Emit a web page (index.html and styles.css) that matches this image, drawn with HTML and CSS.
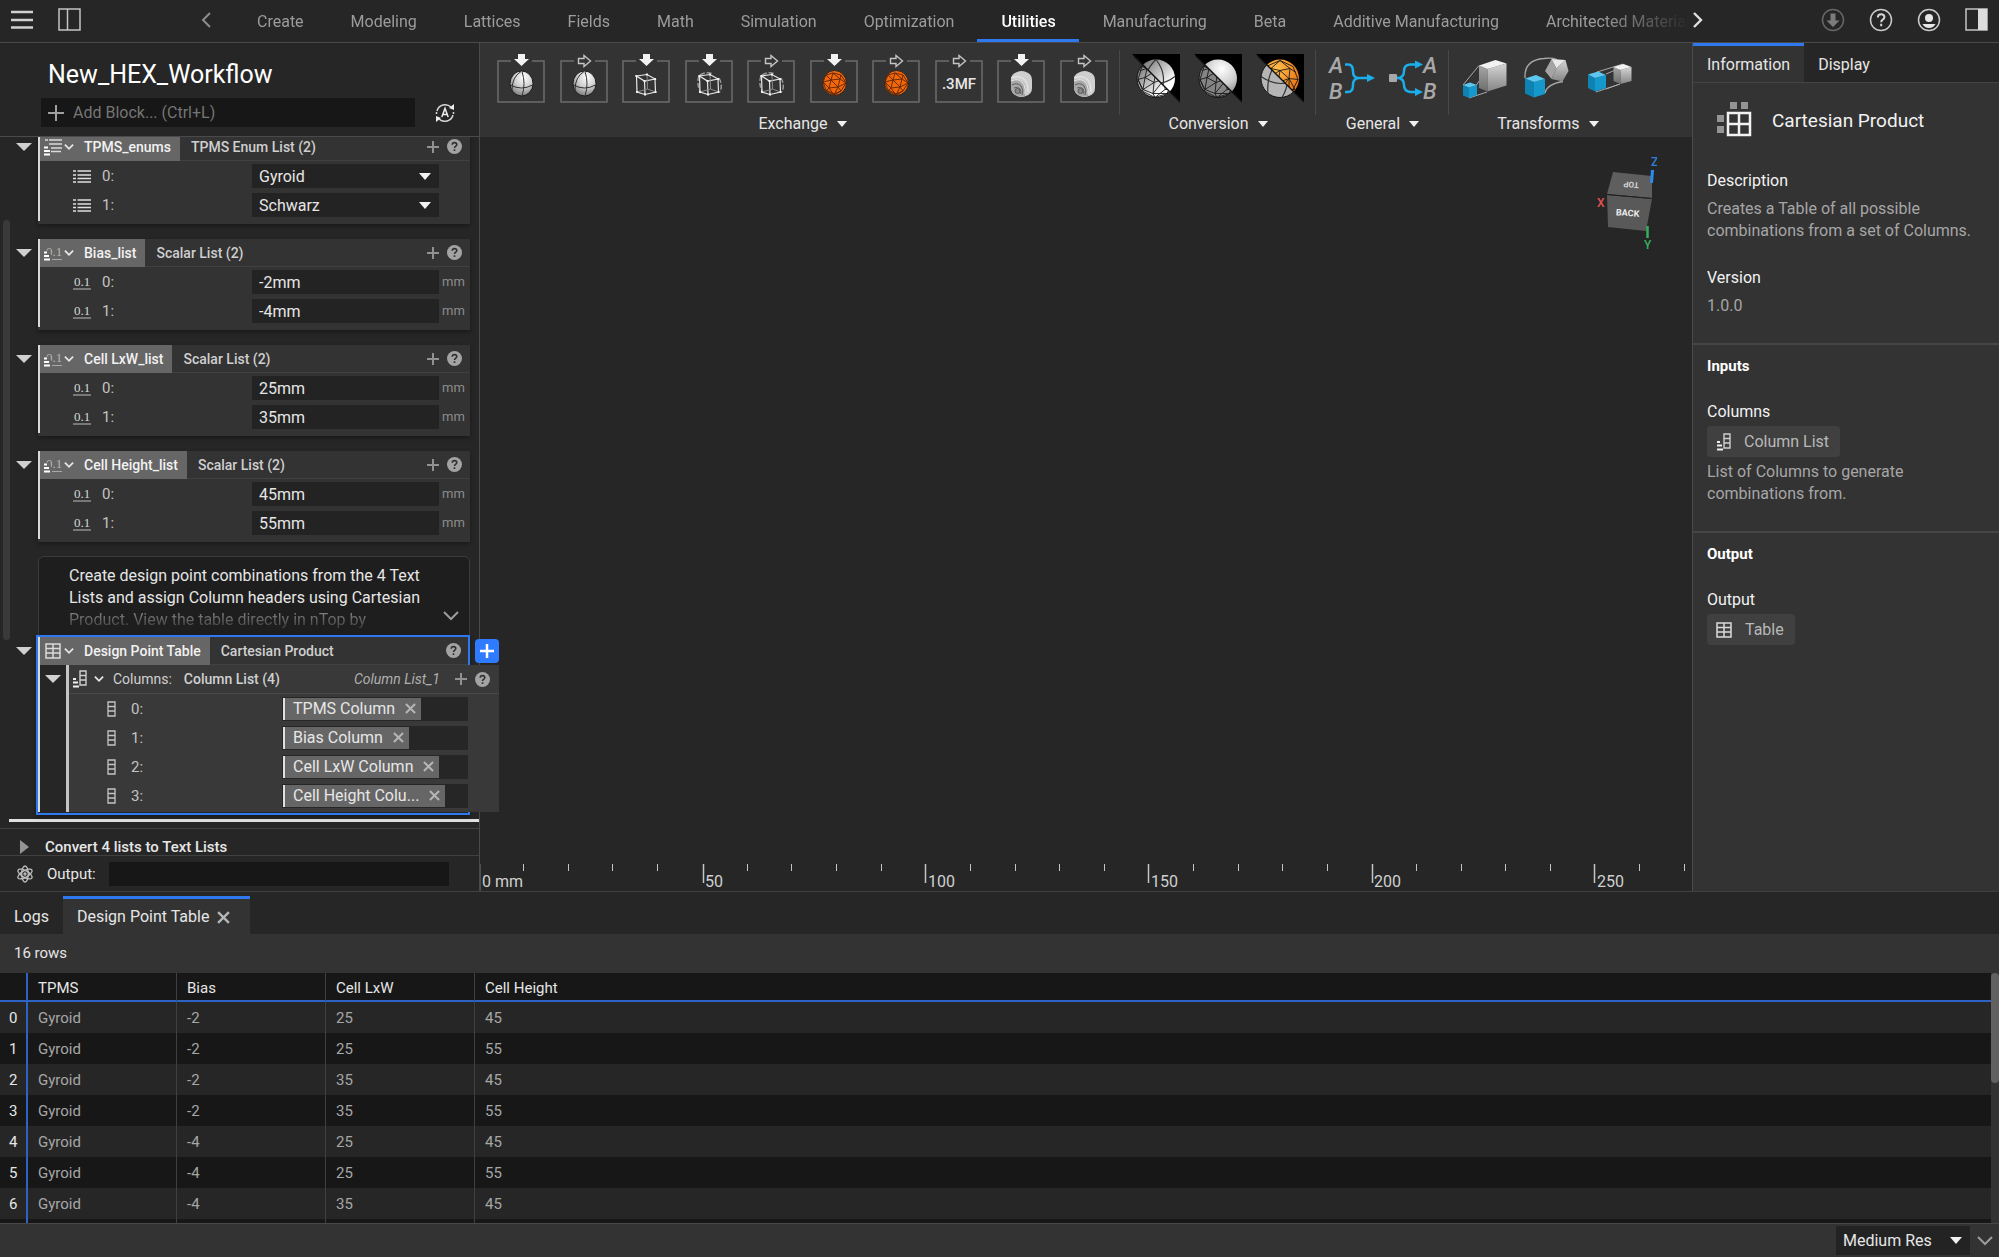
FILE: index.html
```html
<!DOCTYPE html>
<html lang="en">
<head>
<meta charset="utf-8">
<title>New_HEX_Workflow</title>
<link rel="stylesheet" href="styles.css">
</head>
<body>
<svg class="defs" width="0" height="0" aria-hidden="true">
  <defs>
    <radialGradient id="ball" cx="60%" cy="25%" r="80%"><stop offset="0" stop-color="#fff"/><stop offset=".5" stop-color="#cfcfcf"/><stop offset="1" stop-color="#777"/></radialGradient>
    <linearGradient id="sheen" x1="0" y1="0" x2="1" y2="1"><stop offset="0" stop-color="#5e5e5e"/><stop offset=".75" stop-color="#fff"/></linearGradient>
    <radialGradient id="amber" cx="40%" cy="25%" r="80%"><stop offset="0" stop-color="#ffc04a"/><stop offset="1" stop-color="#e8660a"/></radialGradient>
    <linearGradient id="steel" x1="0" y1="0" x2="0" y2="1"><stop offset="0" stop-color="#d5d5d5"/><stop offset="1" stop-color="#858585"/></linearGradient>
    <linearGradient id="steelDark" x1="0" y1="0" x2="0" y2="1"><stop offset="0" stop-color="#a5a5a5"/><stop offset="1" stop-color="#6e6e6e"/></linearGradient>
    <clipPath id="lower"><path d="M0 0L48 48H0z"/></clipPath>
    <clipPath id="upper"><path d="M0 0H48V48z"/></clipPath>
  </defs>
  <symbol id="frame" viewBox="0 0 48 49"><path d="M14 7H1V48H47V7H35" fill="none" stroke="#6c6c6c" stroke-width="1.5"/></symbol>
  <symbol id="down" viewBox="0 0 48 49"><path d="M21 0h7v5h4l-7.500 7-7.500-7h4z" fill="#f2f2f2"/></symbol>
  <symbol id="out" viewBox="0 0 48 49"><path d="M18.500 4.500h5.500V1.500l6.500 5.500-6.500 5.500V9.500h-5.500z" fill="none" stroke="#c4c4c4" stroke-width="1.400"/></symbol>
  <symbol id="egg" viewBox="0 0 48 49"><ellipse cx="24.500" cy="29.500" rx="11.500" ry="12.500" fill="url(#ball)" stroke="#1c1c1c"/><path d="M13.500 31q11 6 22 0M25 17.500q4 12 0 24.500M24 17.500Q15 23 15 36" fill="none" stroke="#333"/></symbol>
  <symbol id="wire" viewBox="0 0 48 49"><path d="M14.500 22L25 20.500 33 25 22.500 27zM14.500 22L15 38l8 2.500L22.500 27M33 25l.5 13L23 40.500" fill="none" stroke="#e6e6e6" stroke-width="1.200"/><path d="M25 20.500L25.500 35 15 38M25.500 35l8 3" fill="none" stroke="#8c8c8c"/><path d="M13.500 21h2v2h-2zM24 19.500h2v2h-2zM32 24h2v2h-2zM21.500 26h2v2h-2zM14 37h2v2h-2zM22 39.500h2v2h-2zM32.500 37h2v2h-2z" fill="#f2f2f2"/></symbol>
  <symbol id="wirecurve" viewBox="0 0 48 49"><path d="M15 21q7-4 13-1M34 24q4 7 1 14M14 22q-3 8 2 17" fill="none" stroke="#9a9a9a" stroke-width="1.500" stroke-dasharray="5 2"/></symbol>
  <symbol id="meshegg" viewBox="0 0 48 49"><ellipse cx="24.500" cy="29" rx="12" ry="12.500" fill="#f2670c" stroke="#262626"/><path d="M16 21l7-2 8 2 5 8-5 8-7 3-8-4-3-8zM13 28l8-2 9-1 6 4M16 21l5 5 2-7 7 6 1-4M21 26l-2 8 9-1 2-8M21 26l7 7 8-4M13 28l6 6-3 3M19 34l5 7 4-8 3 4M16 37l8 4 7-4" fill="none" stroke="#5c2404" stroke-width=".9"/></symbol>
  <symbol id="slices" viewBox="0 0 48 49"><path d="M14 28q-1-8 6-10 5-2 9 0 6 2 6 8v8q0 6-6 8-5 2-9 0-6-3-6-8z" fill="#cfcfcf"/><path d="M14 26q6-2 11 1 4 3 4 9l-1 6q-4 1-8 0-6-3-6-8z" fill="#a8a8a8"/><path d="M14 24q8-3 13 1 4 4 4 13M14 27q7-3 11 1 4 4 3 12" fill="none" stroke="#ececec"/><path d="M15 31q5-3 9 1 3 4 1 9M17 34q4-2 6 1 2 3 0 5" fill="none" stroke="#5e5e5e"/><circle cx="20.500" cy="37" r="2.500" fill="#8a8a8a" stroke="#5a5a5a"/></symbol>
  <symbol id="facets" viewBox="0 0 48 48"><path d="M10 12l14-6 13 6 5 13-7 14-12 4-12-6-5-12zM8 16l7-2 9 2 10-2 6 4M10 12l5 2 9-8 10 8M15 14l-2 9 11-7 9 8 1-10M6 25l7-2 9 5 11-4 9 1M13 23l-2 12 11-7 2-12M22 28l-1 11 12-15 6 11M11 35l10 4 14 0M21 39l2 4 10-8 0-11M33 35l6 0M11 35l-5-10" fill="none" stroke="#1a1a1a" stroke-width=".9"/></symbol>
  <symbol id="arcs" viewBox="0 0 48 48"><path d="M5 22q20 14 38 0M24 5q14 18 2 38M24 5Q10 18 12 40" fill="none" stroke="#333" stroke-width="1.200"/></symbol>
  <symbol id="caret" viewBox="0 0 12 7"><path d="M0 0h12L6 7z" fill="#f2f2f2"/></symbol>
  <symbol id="chev" viewBox="0 0 11 8"><path d="M1 1.500l4.500 4.500L10 1.500" fill="none" stroke="#e6e6e6" stroke-width="2"/></symbol>
  <symbol id="add" viewBox="0 0 14 14"><path d="M7 1v12M1 7h12" stroke="#919191" stroke-width="2"/></symbol>
  <symbol id="help" viewBox="0 0 15 15"><circle cx="7.500" cy="7.500" r="7.500" fill="#a3a3a3"/><path d="M5.200 5.800q.1-2.200 2.300-2.200t2.300 1.900q0 1-1.200 1.800-1.100.7-1.100 1.600M7.500 10.200v1.800" fill="none" stroke="#303030" stroke-width="1.600"/></symbol>
  <symbol id="list" viewBox="0 0 18 14"><path d="M0 2h3M0 6h3M0 9.500h3M0 13h3M4.500 2H18M4.500 6H18M4.500 9.500H18M4.500 13H18" stroke="#e0e0e0" stroke-width="1.700"/></symbol>
  <symbol id="enumlist" viewBox="0 0 20 18"><path d="M2 2h3M6 2h13M6 6h13M8 10h11M8 13.500h10" stroke="#d9d9d9" stroke-width="1.700"/><path d="M1 9.500h4M1 13h6M1 16.500h6" stroke="#fff" stroke-width="2"/></symbol>
  <symbol id="tbl" viewBox="0 0 16 16"><path d="M1 1h14v14H1zM1 5.500h14M1 10h14M8 1v14" fill="none" stroke="#dadada" stroke-width="1.500"/></symbol>
  <symbol id="collist" viewBox="0 0 15 18"><path d="M8 1h6v14H8zM8 5.500h6M8 10h6" fill="none" stroke="#cfcfcf" stroke-width="1.400"/><path d="M1 9h3M1 12.500h5M1 16.500h6" stroke="#eee" stroke-width="2"/></symbol>
  <symbol id="col" viewBox="0 0 9 16"><path d="M1 1h7v14H1zM1 5.500h7M1 10h7" fill="none" stroke="#c4c4c4" stroke-width="1.300"/></symbol>
  <symbol id="x" viewBox="0 0 12 12"><path d="M1 1l10 10M11 1L1 11" stroke="#b5b5b5" stroke-width="2.200"/></symbol>
</svg>
<svg hidden>
  <symbol id="scalarlist" viewBox="0 0 20 18"><text x="3" y="12" font-family="Liberation Serif, serif" font-size="13" fill="#b5b5b5">0.1</text><path d="M9 15.500h10" stroke="#a8a8a8"/><path d="M0 6.500h5v3h3v9H0z" fill="#666"/><path d="M1 8.500h3M1 12h5M1 15.500h6" stroke="#fff" stroke-width="2"/></symbol>
  <symbol id="scalar" viewBox="0 0 18 16"><text x="1" y="12" font-family="Liberation Serif, serif" font-size="13" fill="#d6d6d6">0.1</text><path d="M0 15h18" stroke="#bdbdbd"/></symbol>
</svg>

<header class="topbar">
  <button class="icon-btn menu-btn" aria-label="Menu"><svg width="24" height="20" viewBox="0 0 24 20"><path d="M1 2h22M1 10h22M1 17.500h22" stroke="#d0d0d0" stroke-width="2.500"/></svg></button>
  <button class="icon-btn" aria-label="Toggle left panel"><svg width="24" height="24" viewBox="0 0 24 24"><path d="M1 1h21v21H1zM9.500 1v21" fill="none" stroke="#c4c4c4" stroke-width="1.500"/></svg></button>
  <button class="icon-btn nav-prev" aria-label="Scroll tabs left"><svg width="10" height="16" viewBox="0 0 10 16"><path d="M9 1L2 8l7 7" fill="none" stroke="#8c8c8c" stroke-width="2"/></svg></button>
  <nav class="nav">
    <a href="#create">Create</a><a href="#modeling">Modeling</a><a href="#lattices">Lattices</a><a href="#fields">Fields</a><a href="#math">Math</a><a href="#simulation">Simulation</a><a href="#optimization">Optimization</a><a class="active" href="#utilities">Utilities</a><a href="#manufacturing">Manufacturing</a><a href="#beta">Beta</a><a href="#additive">Additive Manufacturing</a><a href="#architected">Architected Material</a>
  </nav>
  <button class="icon-btn nav-next" aria-label="Scroll tabs right"><svg width="10" height="16" viewBox="0 0 10 16"><path d="M1 1l7 7-7 7" fill="none" stroke="#e0e0e0" stroke-width="2.400"/></svg></button>
  <div class="top-actions">
    <button class="icon-btn" aria-label="Download"><svg width="24" height="24" viewBox="0 0 24 24"><circle cx="12" cy="12" r="10.500" fill="none" stroke="#666" stroke-width="1.500"/><path d="M9.500 5.500h5v7h4L12 19l-6.500-6.500h4z" fill="#7c7c7c"/></svg></button>
    <button class="icon-btn" aria-label="Help"><svg width="24" height="24" viewBox="0 0 24 24"><circle cx="12" cy="12" r="10.500" fill="none" stroke="#c9c9c9" stroke-width="1.500"/><path d="M8.800 9.500q.1-3.300 3.300-3.300t3.300 2.700q0 1.500-1.700 2.700-1.500 1-1.500 2.600M12.200 15.800v2.400" fill="none" stroke="#d6d6d6" stroke-width="2"/></svg></button>
    <button class="icon-btn" aria-label="Account"><svg width="24" height="24" viewBox="0 0 24 24"><circle cx="12" cy="12" r="10.500" fill="none" stroke="#c9c9c9" stroke-width="1.500"/><circle cx="12" cy="10" r="4" fill="#e6e6e6"/><path d="M5.500 16h13q-2 4-6.500 4t-6.500-4z" fill="#e6e6e6"/></svg></button>
    <button class="icon-btn" aria-label="Toggle right panel"><svg width="24" height="24" viewBox="0 0 24 24"><path d="M1 1h21v21H1z" fill="none" stroke="#c4c4c4" stroke-width="1.500"/><path d="M13 1h9v21h-9z" fill="#dcdcdc"/></svg></button>
  </div>
</header>

<main class="main">
  <aside class="left">
    <div class="left-head">
      <h1>New_HEX_Workflow</h1>
      <div class="add-row">
        <label class="add-box"><svg width="16" height="16" viewBox="0 0 16 16"><path d="M8 0v16M0 8h16" stroke="#a0a0a0" stroke-width="2"/></svg><input type="text" placeholder="Add Block... (Ctrl+L)" aria-label="Add Block"></label>
        <button class="icon-btn" aria-label="Auto run"><svg width="20" height="20" viewBox="0 0 20 20"><path d="M16 4A8.500 8.500 0 0 0 2 8M4 16a8.500 8.500 0 0 0 14-4M1.500 11V9M18.500 11V9" fill="none" stroke="#d6d6d6" stroke-width="1.500"/><path d="M19 1v6l-5-2zM1 19v-6l5 2z" fill="#eee"/><path d="M6.800 14L10 5.500l3.200 8.500M8 11.500h4" fill="none" stroke="#eee" stroke-width="1.500"/></svg></button>
      </div>
    </div>

    <div class="tree">
      <div class="thumb"></div>
      <div class="tree-list">
        <section class="node">
          <button class="toggle" aria-label="Collapse TPMS_enums"></button>
          <div class="block"><div class="block-in">
            <header class="bh"><span class="bname"><svg class="i-list"><use href="#enumlist"/></svg><svg class="i-chev"><use href="#chev"/></svg>TPMS_enums</span><span class="btype">TPMS Enum List (2)</span><svg class="i-add"><use href="#add"/></svg><svg class="i-help"><use href="#help"/></svg></header>
            <div class="row"><svg class="i-row"><use href="#list"/></svg><label for="e0">0:</label><span class="sel"><select id="e0"><option>Gyroid</option></select><svg><use href="#caret"/></svg></span></div>
            <div class="row"><svg class="i-row"><use href="#list"/></svg><label for="e1">1:</label><span class="sel"><select id="e1"><option>Schwarz</option></select><svg><use href="#caret"/></svg></span></div>
          </div></div>
        </section>
        <section class="node">
          <button class="toggle" aria-label="Collapse Bias_list"></button>
          <div class="block"><div class="block-in">
            <header class="bh"><span class="bname"><svg class="i-list"><use href="#scalarlist"/></svg><svg class="i-chev"><use href="#chev"/></svg>Bias_list</span><span class="btype">Scalar List (2)</span><svg class="i-add"><use href="#add"/></svg><svg class="i-help"><use href="#help"/></svg></header>
            <div class="row"><svg class="i-row"><use href="#scalar"/></svg><label for="b0">0:</label><input id="b0" type="text" value="-2mm"><span class="unit">mm</span></div>
            <div class="row"><svg class="i-row"><use href="#scalar"/></svg><label for="b1">1:</label><input id="b1" type="text" value="-4mm"><span class="unit">mm</span></div>
          </div></div>
        </section>
        <section class="node">
          <button class="toggle" aria-label="Collapse Cell LxW_list"></button>
          <div class="block"><div class="block-in">
            <header class="bh"><span class="bname"><svg class="i-list"><use href="#scalarlist"/></svg><svg class="i-chev"><use href="#chev"/></svg>Cell LxW_list</span><span class="btype">Scalar List (2)</span><svg class="i-add"><use href="#add"/></svg><svg class="i-help"><use href="#help"/></svg></header>
            <div class="row"><svg class="i-row"><use href="#scalar"/></svg><label for="c0">0:</label><input id="c0" type="text" value="25mm"><span class="unit">mm</span></div>
            <div class="row"><svg class="i-row"><use href="#scalar"/></svg><label for="c1">1:</label><input id="c1" type="text" value="35mm"><span class="unit">mm</span></div>
          </div></div>
        </section>
        <section class="node">
          <button class="toggle" aria-label="Collapse Cell Height_list"></button>
          <div class="block"><div class="block-in">
            <header class="bh"><span class="bname"><svg class="i-list"><use href="#scalarlist"/></svg><svg class="i-chev"><use href="#chev"/></svg>Cell Height_list</span><span class="btype">Scalar List (2)</span><svg class="i-add"><use href="#add"/></svg><svg class="i-help"><use href="#help"/></svg></header>
            <div class="row"><svg class="i-row"><use href="#scalar"/></svg><label for="h0">0:</label><input id="h0" type="text" value="45mm"><span class="unit">mm</span></div>
            <div class="row"><svg class="i-row"><use href="#scalar"/></svg><label for="h1">1:</label><input id="h1" type="text" value="55mm"><span class="unit">mm</span></div>
          </div></div>
        </section>
      </div>

      <div class="note">
        <p>Create design point combinations from the 4 Text Lists and assign Column headers using Cartesian <span class="fade">Product. View the table directly in nTop by</span></p>
        <button class="icon-btn" aria-label="Expand note"><svg width="16" height="10" viewBox="0 0 16 10"><path d="M1 1l7 7 7-7" fill="none" stroke="#9c9c9c" stroke-width="2"/></svg></button>
      </div>

      <section class="node selected">
        <button class="toggle" aria-label="Collapse Design Point Table"></button>
        <div class="block"><div class="block-in">
          <header class="bh"><span class="bname"><svg class="i-tbl"><use href="#tbl"/></svg><svg class="i-chev"><use href="#chev"/></svg>Design Point Table</span><span class="btype">Cartesian Product</span><svg class="i-help"><use href="#help"/></svg></header>
          <div class="nest">
            <button class="toggle" aria-label="Collapse Columns"></button>
            <div class="nest-panel">
              <header class="nh"><svg class="i-col"><use href="#collist"/></svg><svg class="i-chev"><use href="#chev"/></svg><span class="nlabel">Columns:</span><span>Column List (4)</span><em>Column List_1</em><svg class="i-add"><use href="#add"/></svg><svg class="i-help"><use href="#help"/></svg></header>
              <div class="nrow"><svg class="i-c"><use href="#col"/></svg><span class="idx">0:</span><div class="slot"><span class="chip"><span>TPMS Column</span><button aria-label="Remove"><svg><use href="#x"/></svg></button></span></div></div>
              <div class="nrow"><svg class="i-c"><use href="#col"/></svg><span class="idx">1:</span><div class="slot"><span class="chip"><span>Bias Column</span><button aria-label="Remove"><svg><use href="#x"/></svg></button></span></div></div>
              <div class="nrow"><svg class="i-c"><use href="#col"/></svg><span class="idx">2:</span><div class="slot"><span class="chip"><span>Cell LxW Column</span><button aria-label="Remove"><svg><use href="#x"/></svg></button></span></div></div>
              <div class="nrow"><svg class="i-c"><use href="#col"/></svg><span class="idx">3:</span><div class="slot"><span class="chip"><span>Cell Height Colu...</span><button aria-label="Remove"><svg><use href="#x"/></svg></button></span></div></div>
            </div>
          </div>
        </div>
        <button class="plus" aria-label="Add block here"><svg width="16" height="16" viewBox="0 0 16 16"><path d="M8 1v14M1 8h14" stroke="#fff" stroke-width="2.500"/></svg></button>
        </div>
      </section>
      <div class="insert-line"></div>
      <div class="closed"><svg width="9" height="14" viewBox="0 0 9 14"><path d="M0 0l9 7-9 7z" fill="#949494"/></svg><h2>Convert 4 lists to Text Lists</h2></div>
    </div>

    <div class="output-row">
      <svg width="18" height="18" viewBox="0 0 18 18" fill="none" stroke="#bdbdbd" stroke-width="1.300"><ellipse cx="9" cy="9" rx="3.300" ry="8"/><ellipse cx="9" cy="9" rx="3.300" ry="8" transform="rotate(60 9 9)"/><ellipse cx="9" cy="9" rx="3.300" ry="8" transform="rotate(120 9 9)"/><circle cx="9" cy="9" r="1"/></svg>
      <label for="outp">Output:</label><input id="outp" type="text">
    </div>
  </aside>

  <section class="center">
    <div class="ribbon">
      <div class="group exchange">
        <div class="tools">
          <button aria-label="Import part"><svg width="48" height="49"><use href="#frame"/><use href="#down"/><use href="#egg"/></svg></button>
          <button aria-label="Export part"><svg width="48" height="49"><use href="#frame"/><use href="#out"/><use href="#egg"/></svg></button>
          <button aria-label="Import lattice"><svg width="48" height="49"><use href="#frame"/><use href="#down"/><use href="#wire"/></svg></button>
          <button aria-label="Import curves"><svg width="48" height="49"><use href="#frame"/><use href="#down"/><use href="#wirecurve"/><use href="#wire"/></svg></button>
          <button aria-label="Export lattice"><svg width="48" height="49"><use href="#frame"/><use href="#out"/><use href="#wirecurve"/><use href="#wire"/></svg></button>
          <button aria-label="Import mesh"><svg width="48" height="49"><use href="#frame"/><use href="#down"/><use href="#meshegg"/></svg></button>
          <button aria-label="Export mesh"><svg width="48" height="49"><use href="#frame"/><use href="#out"/><use href="#meshegg"/></svg></button>
          <button aria-label="Export 3MF"><svg width="48" height="49"><use href="#frame"/><use href="#out"/><text x="24" y="35" text-anchor="middle" font-size="15" font-weight="500" fill="#e6e6e6">.3MF</text></svg></button>
          <button aria-label="Import slices"><svg width="48" height="49"><use href="#frame"/><use href="#down"/><use href="#slices"/></svg></button>
          <button aria-label="Export slices"><svg width="48" height="49"><use href="#frame"/><use href="#out"/><use href="#slices"/></svg></button>
        </div>
        <button class="glabel">Exchange <svg><use href="#caret"/></svg></button>
      </div>
      <div class="group conversion">
        <div class="tools">
          <button aria-label="Body from mesh"><svg width="48" height="49" viewBox="0 0 48 49"><path d="M0 0H48V48z"/><circle cx="24" cy="24.500" r="19" fill="url(#sheen)"/><g clip-path="url(#upper)"><use href="#arcs"/></g><g clip-path="url(#lower)"><circle cx="24" cy="24.500" r="19" fill="url(#sheen)" stroke="#111"/><use href="#facets"/></g><path d="M2 2L48 48" stroke="#111" stroke-width="1.500"/></svg></button>
          <button aria-label="Mesh from body"><svg width="48" height="49" viewBox="0 0 48 49"><path d="M0 0H48V48z"/><circle cx="24" cy="24.500" r="19" fill="url(#ball)"/><g clip-path="url(#lower)"><circle cx="24" cy="24.500" r="19" fill="#858585" stroke="#111"/><use href="#facets"/></g><path d="M2 2L48 48" stroke="#111" stroke-width="1.500"/></svg></button>
          <button aria-label="Volume mesh"><svg width="48" height="49" viewBox="0 0 48 49"><path d="M0 0H48V48z"/><circle cx="24" cy="24.500" r="19" fill="url(#amber)"/><g clip-path="url(#upper)"><use href="#facets"/></g><g clip-path="url(#lower)"><circle cx="24" cy="24.500" r="19" fill="#b5b5b5" stroke="#111"/><use href="#arcs"/></g><path d="M2 2L48 48" stroke="#111" stroke-width="1.500"/></svg></button>
        </div>
        <button class="glabel">Conversion <svg><use href="#caret"/></svg></button>
      </div>
      <div class="group general">
        <div class="tools">
          <button aria-label="Merge"><svg width="48" height="49" viewBox="0 0 48 49"><g font-size="22" font-style="italic" font-weight="500" fill="#a8a8a8"><text x="1" y="19">A</text><text x="1" y="45">B</text></g><path d="M17 10.500h3q5 0 5 7 0 6 5 6.500h10M17 38h3q5 0 5-7 0-6 5-7" fill="none" stroke="#1aaeea" stroke-width="2.500"/><path d="M39 20l8 4-8 4z" fill="#1aaeea"/></svg></button>
          <button aria-label="Split"><svg width="48" height="49" viewBox="0 0 48 49"><g font-size="22" font-style="italic" font-weight="500" fill="#a8a8a8"><text x="34" y="19">A</text><text x="34" y="45">B</text></g><path d="M8 24q7 0 7-7 0-6 6-6.500h6M8 24q7 0 7 7 0 6 6 7h6" fill="none" stroke="#1aaeea" stroke-width="2.500"/><path d="M26 6.500l8 4-8 4zM26 34l8 4-8 4z" fill="#1aaeea"/><rect y="20" width="8" height="8" rx="1" fill="#a8a8a8"/></svg></button>
        </div>
        <button class="glabel">General <svg><use href="#caret"/></svg></button>
      </div>
      <div class="group transforms">
        <div class="tools">
          <button aria-label="Scale"><svg width="48" height="49" viewBox="0 0 48 49"><path d="M2 31L18 11.500M8 44l18-6M15.500 31L26 15" stroke="#a8a8a8"/><path d="M18 11.500L26.500 15v22.500L18 34z" fill="url(#steelDark)"/><path d="M26.500 15l19-5.500v22l-19 6z" fill="url(#steel)"/><path d="M18 11.500L34.500 6l11 3.500-19 5.500z" fill="#f2f2f2"/><path d="M2 31l6 2.500V44l-6-2.500z" fill="#0f82b4"/><path d="M8 33.500l8-2.500v10l-8 3z" fill="#1598cc"/><path d="M2 31l7-2.500 7 2.500-8 2.500z" fill="#5cc8f0"/></svg></button>
          <button aria-label="Rotate"><svg width="48" height="49" viewBox="0 0 48 49"><path d="M1 24Q0 6 20 4.500q8-1 13 1M21 39q2-9 18-11.500" fill="none" stroke="#a8a8a8" stroke-width="1.300"/><path d="M21 17l6.500-12 5 9.500-5 10.500z" fill="#a4a4a4"/><path d="M27.500 5l14 1-9 8.500z" fill="#e9e9e9"/><path d="M41.500 6l3 11-6 10.500-11-2.500 5-10.500z" fill="url(#steel)"/><path d="M1 24.500l9 3.500v15.500l-9-4z" fill="#0f82b4"/><path d="M10 28l11-3v15l-11 3.500z" fill="#1598cc"/><path d="M1 24.500L12 21l9 4-11 3z" fill="#5cc8f0"/></svg></button>
          <button aria-label="Translate"><svg width="48" height="49" viewBox="0 0 48 49"><path d="M10 18l26-8M9 38l24-8M19 20l14-6M19 35l14-5" stroke="#a8a8a8"/><path d="M26.500 13l7 3v14l-7-3z" fill="url(#steelDark)"/><path d="M33.500 16l11-3v14l-11 3z" fill="url(#steel)"/><path d="M26.500 13l10-3 8 3-11 3z" fill="#f2f2f2"/><path d="M1 20.500l7 3.500v13.500l-7-3.500z" fill="#0f82b4"/><path d="M8 24l11-3v13l-11 3.500z" fill="#1598cc"/><path d="M1 20.500l10-3 8 3.500-11 3z" fill="#5cc8f0"/></svg></button>
        </div>
        <button class="glabel">Transforms <svg><use href="#caret"/></svg></button>
      </div>
    </div>
    <div class="viewport">
      <svg class="viewcube" width="66" height="100" viewBox="0 0 66 100" role="img" aria-label="View cube">
        <path d="M22 19l39 4v22l-45-4z" fill="#5e5e5e"/><path d="M16 42l45 4-6 32-38-4z" fill="#595959"/><path d="M16 41.500l45 4" stroke="#222"/>
        <path d="M60.500 30l1-13" stroke="#2b8cf0" stroke-width="3"/><path d="M56.500 73v12" stroke="#35b060" stroke-width="2.500"/>
        <g font-size="12" font-weight="500"><text x="60" y="13" fill="#2f7fd6">Z</text><text x="6" y="54" fill="#e05252">X</text><text x="53" y="96" fill="#35b060">Y</text></g>
        <text x="25" y="63" font-size="9" font-weight="700" fill="#eee" transform="rotate(4 37 60)">BACK</text>
        <text x="-50" y="-26" font-size="8" font-weight="700" fill="#d6d6d6" transform="rotate(184)">TOP</text>
      </svg>
      <svg class="ruler" width="1212" height="27" viewBox="0 0 1212 27">
        <path d="M44.500 0v7M89.500 0v7M133.500 0v7M178.500 0v7M268.500 0v7M312.500 0v7M357.500 0v7M402.500 0v7M491.500 0v7M536.500 0v7M580.500 0v7M625.500 0v7M714.500 0v7M759.500 0v7M803.500 0v7M848.500 0v7M937.500 0v7M982.500 0v7M1026.500 0v7M1071.500 0v7M1160.500 0v7M1205.500 0v7" stroke="#c4c4c4"/>
        <path d="M.5 0v27M224.500 0v19M446.500 0v19M669.500 0v19M893.500 0v19M1115.500 0v19" stroke="#c4c4c4" stroke-width="1.500"/>
        <g font-size="16" fill="#d0d0d0"><text x="3" y="23">0 mm</text><text x="226" y="23">50</text><text x="449" y="23">100</text><text x="672" y="23">150</text><text x="895" y="23">200</text><text x="1118" y="23">250</text></g>
      </svg>
    </div>
  </section>

  <aside class="right">
    <div class="rtabs" role="tablist"><button role="tab" class="on" aria-selected="true">Information</button><button role="tab" aria-selected="false">Display</button></div>
    <div class="rbody">
      <section>
        <div class="rtitle"><svg width="35" height="35" viewBox="0 0 35 35"><path d="M13 0h7v7h-7zM24 0h7v7h-7zM0 13h7v7H0zM0 24h7v7H0z" fill="#949494"/><path d="M11 11h22v22H11zM11 22h22M22 11v22" fill="none" stroke="#f2f2f2" stroke-width="2.500"/></svg><h2>Cartesian Product</h2></div>
        <h3>Description</h3>
        <p>Creates a Table of all possible combinations from a set of Columns.</p>
        <h3 class="gap">Version</h3>
        <p>1.0.0</p>
      </section>
      <section>
        <h2 class="sec">Inputs</h2>
        <h3>Columns</h3>
        <button class="tag"><svg width="15" height="18"><use href="#collist"/></svg>Column List</button>
        <p>List of Columns to generate combinations from.</p>
      </section>
      <section>
        <h2 class="sec">Output</h2>
        <h3>Output</h3>
        <button class="tag"><svg width="16" height="16"><use href="#tbl"/></svg>Table</button>
      </section>
    </div>
  </aside>
</main>

<section class="bottom">
  <div class="btabs" role="tablist"><button role="tab" aria-selected="false">Logs</button><button role="tab" class="on" aria-selected="true">Design Point Table<svg width="13" height="13"><use href="#x"/></svg></button></div>
  <p class="count">16 rows</p>
  <div class="table-area">
    <div class="table-clip">
    <table>
      <colgroup><col class="c-idx"><col class="c-val"><col class="c-val"><col class="c-val"><col></colgroup>
      <thead><tr><td></td><th>TPMS</th><th>Bias</th><th>Cell LxW</th><th>Cell Height</th></tr></thead>
      <tbody>
        <tr><th>0</th><td>Gyroid</td><td>-2</td><td>25</td><td>45</td></tr>
        <tr><th>1</th><td>Gyroid</td><td>-2</td><td>25</td><td>55</td></tr>
        <tr><th>2</th><td>Gyroid</td><td>-2</td><td>35</td><td>45</td></tr>
        <tr><th>3</th><td>Gyroid</td><td>-2</td><td>35</td><td>55</td></tr>
        <tr><th>4</th><td>Gyroid</td><td>-4</td><td>25</td><td>45</td></tr>
        <tr><th>5</th><td>Gyroid</td><td>-4</td><td>25</td><td>55</td></tr>
        <tr><th>6</th><td>Gyroid</td><td>-4</td><td>35</td><td>45</td></tr>
        <tr aria-hidden="true"><th></th><td></td><td></td><td></td><td></td></tr>
      </tbody>
    </table>
    </div>
    <div class="vscroll"><div></div></div>
  </div>
</section>
<footer class="status">
  <span class="sel res"><select aria-label="Resolution"><option>Medium Res</option></select><svg><use href="#caret"/></svg></span>
  <button class="icon-btn" aria-label="Collapse panel"><svg width="16" height="10" viewBox="0 0 16 10"><path d="M1 1l7 7 7-7" fill="none" stroke="#9c9c9c" stroke-width="2"/></svg></button>
</footer>
</body>
</html>
```

FILE: styles.css
```css
:root {
  --bg: #262626;
  --panel: #333333;
  --deep: #171717;
  --line: #4a4a4a;
  --blue: #2e78f0;
  --text: #e6e6e6;
  --muted: #a6a6a6;
}
* { box-sizing: border-box; margin: 0; }
body {
  display: flex;
  flex-direction: column;
  min-height: 100vh;
  background: var(--bg);
  color: var(--text);
  font: 16px/22px Roboto, "Liberation Sans", sans-serif;
}
button, input, select { font: inherit; color: inherit; border: 0; border-radius: 0; background: none; padding: 0; min-width: 0; }
svg { display: block; flex: none; }
svg[hidden] { display: none; }
.defs { position: absolute; }
h1, h2, h3 { font-size: 16px; font-weight: 400; }

/* top bar */
.topbar { display: flex; align-items: center; height: 43px; padding: 0 10px; border-bottom: 1px solid var(--line); }
.topbar .icon-btn { margin-bottom: 2px; }
.menu-btn { margin-right: 24px; }
.nav-prev { margin: 0 22px 0 119px; }
.nav { display: flex; flex: 0 1 1458px; min-width: 0; overflow: hidden; align-self: stretch; mask-image: linear-gradient(to left, transparent 0, #000 90px); }
.nav a { flex: none; padding: 11px 23px 6px 24px; color: #9c9c9c; text-decoration: none; }
.nav a.active { color: #fff; font-weight: 500; border-bottom: 3px solid var(--blue); }
.nav-next { margin-left: 2px; }
.top-actions { display: flex; gap: 24px; margin-left: auto; }

.main { display: flex; flex: 1 1 0; min-height: 0; border-bottom: 1px solid #404040; }

/* workflow panel */
.left { display: flex; flex-direction: column; flex: none; width: 480px; border-right: 1px solid var(--line); position: relative; z-index: 1; }
.left-head { height: 94px; padding: 16px 24px 8px 41px; border-bottom: 1px solid var(--line); }
.left-head h1 { font-size: 25px; line-height: 32px; padding-left: 7px; margin-bottom: 7px; color: #fff; }
.add-row { display: flex; justify-content: space-between; align-items: center; }
.add-box { display: flex; align-items: center; gap: 9px; width: 374px; height: 29px; padding-left: 7px; background: var(--deep); }
.add-box input { flex: 1; }
.add-box input::placeholder { color: #757575; opacity: 1; }

.tree { flex: 1 1 0; min-height: 0; overflow-x: visible; overflow-y: clip; position: relative; }
.thumb { position: absolute; left: 3px; top: 83px; width: 7px; height: 420px; border-radius: 4px; background: #3a3a3a; }
.tree-list { display: flex; flex-direction: column; gap: 15px; margin-top: -4px; }
.node { display: flex; align-items: flex-start; padding-right: 9px; }
.toggle { flex: none; width: 38px; height: 28px; display: grid; place-items: center; padding-left: 10px; }
.toggle::before { content: ""; border: 8px solid transparent; border-top: 8px solid #d0d0d0; border-bottom: 0; }
.block { flex: 1; min-width: 0; background: var(--panel); padding-bottom: 3px; box-shadow: 0 2px 4px rgba(0, 0, 0, .35); }
.block-in { border-left: 2px solid #d9d9d9; padding-bottom: 2px; }
.bh { display: flex; align-items: center; height: 28px; padding-right: 8px; border-bottom: 1px solid #414141; font-size: 14px; font-weight: 500; }
.bname { display: flex; align-items: center; align-self: stretch; margin-bottom: -1px; padding: 0 9px 0 3px; background: #666; color: #f2f2f2; }
.btype { flex: 1; padding-left: 11px; color: #cfcfcf; }
.i-list { width: 20px; height: 18px; }
.i-tbl { width: 16px; height: 16px; margin: 0 2px; }
.i-chev { width: 10px; height: 8px; margin: 0 10px 0 1px; }
.i-add { width: 14px; height: 14px; margin-right: 7px; }
.i-help { width: 15px; height: 15px; }
.row { display: flex; align-items: center; height: 29px; padding: 3px 5px 2px 33px; }
.i-row { width: 18px; height: 16px; margin-right: 11px; }
.row label { width: 150px; color: #c4c4c4; font-size: 15px; }
.row input, .sel { width: 187px; height: 24px; background: #232323; }
.row input { padding: 0 7px; }
.unit { margin-left: 3px; font-size: 13px; color: #8c8c8c; }
.sel { display: grid; align-items: center; }
.sel > * { grid-area: 1 / 1; }
.sel select { appearance: none; width: 100%; height: 100%; padding: 1px 7px 0; }
.sel svg { justify-self: end; width: 12px; height: 7px; margin-right: 8px; pointer-events: none; }

.note { display: flex; align-items: flex-end; height: 80px; margin: 14px 9px 0 38px; padding: 8px 10px 8px 30px; border: 1px solid #3b3b3b; border-radius: 6px 6px 0 0; background: #1e1e1e; }
.note p { flex: 1; align-self: flex-start; }
.note .icon-btn { padding-bottom: 6px; }
.fade { color: transparent; background: linear-gradient(#8c8c8c, #3c3c3c); background-clip: text; }

.selected { position: relative; margin-top: -1px; }
.selected > .toggle { margin: 2px -2px 0 0; }
.selected > .block { border: 2px solid var(--blue); padding-bottom: 1px; background: var(--bg); position: relative; }
.selected .block-in { padding-bottom: 0; }
.selected .bh { background: var(--panel); padding-right: 7px; }
.plus { position: absolute; right: -31px; top: 2px; width: 24px; height: 24px; border-radius: 4px; background: #2e7bff; display: grid; place-items: center; }
.nest { display: flex; margin-right: -31px; position: relative; }
.nest .toggle { width: 26px; padding: 0; }
.nest-panel { flex: 1; border-left: 3px solid #c4c4c4; background: #393939; padding-bottom: 2px; }
.nh { display: flex; align-items: center; height: 29px; padding: 0 9px 0 3px; border-bottom: 1px solid #494949; font-size: 14px; font-weight: 500; color: #d0d0d0; }
.nh .i-chev { margin: 0 9px 0 7px; }
.nh em { margin: 0 14px 0 auto; font-weight: 400; color: #b0b0b0; }
.nh .i-col { width: 15px; height: 18px; }
.nlabel { margin-right: 12px; font-weight: 400; }
.nrow { display: flex; align-items: center; height: 29px; padding: 2px 31px 2px 38px; }
.i-c { width: 9px; height: 16px; margin-right: 15px; }
.idx { flex: 1; color: #c4c4c4; font-size: 15px; }
.slot { display: flex; width: 186px; height: 24px; padding: 1px; background: #262626; }
.chip { display: flex; align-items: center; gap: 10px; padding: 0 5px 0 8px; border-left: 2px solid #e0e0e0; background: #666; }
.chip svg { width: 11px; height: 11px; }

.insert-line { height: 3px; margin: 4px 0 0 9px; background: #e0e0e0; }
.closed { display: flex; align-items: center; gap: 16px; margin-top: 6px; padding: 7px 0 0 20px; border-top: 1px solid #404040; }
.closed h2 { font-size: 15px; line-height: 22px; font-weight: 500; }
.output-row { display: flex; align-items: center; height: 36px; padding: 0 30px 0 16px; border-top: 1px solid #404040; font-size: 15px; }
.output-row label { padding: 0 13px; }
.output-row input { flex: 1; height: 24px; background: var(--deep); }

/* ribbon and viewport */
.center { display: flex; flex-direction: column; flex: 1; min-width: 0; }
.ribbon { display: flex; height: 94px; background: var(--panel); overflow: hidden; }
.group { display: flex; flex-direction: column; flex: none; padding: 11px 12px 0; background: linear-gradient(#484848, #484848) right 7px / 1px 65px no-repeat; }
.group:last-child { background: none; }
.tools { display: flex; justify-content: space-between; }
.exchange { width: 640px; padding: 11px 12px 0 17px; }
.conversion { width: 196px; }
.general { width: 133px; }
.transforms { width: 198px; }
.glabel { display: flex; align-items: center; justify-content: center; gap: 9px; margin-top: 10px; }
.glabel svg { width: 10px; height: 6px; }
.viewport { display: flex; flex: 1; flex-direction: column; justify-content: space-between; overflow: hidden; }
.viewcube { align-self: flex-end; margin: 16px 35px 0 0; }
.ruler { margin-left: -1px; }

/* information panel */
.right { flex: none; width: 307px; background: var(--panel); border-left: 1px solid var(--line); }
.rtabs { display: flex; height: 40px; background: var(--bg); border-bottom: 1px solid #444; }
.rtabs button { padding: 1px 14px 0; border-top: 3px solid transparent; }
.rtabs .on { background: var(--panel); border-top-color: var(--blue); }
.rbody section { padding: 10px 14px 26px; border-bottom: 2px solid #464646; }
.rbody section:last-child { border: 0; }
.rbody section:first-child { padding: 19px 14px 26px; }
.rtitle { display: flex; align-items: center; gap: 20px; padding-left: 10px; margin-bottom: 33px; }
.rtitle h2 { font-size: 19px; color: #f2f2f2; padding-top: 3px; }
.rbody h3 { margin-bottom: 6px; color: #f2f2f2; }
.rbody h3.gap { margin-top: 25px; }
.rbody p { color: var(--muted); }
.rbody .sec { font-size: 15px; font-weight: 700; color: #fff; margin-bottom: 24px; line-height: 22px; }
.rbody section + section h3 { margin-bottom: 3px; }
.tag { display: flex; align-items: center; gap: 13px; height: 31px; margin-bottom: 4px; padding: 0 11px 0 9px; border-radius: 4px; background: #404040; color: #b8b8b8; }

/* results table */
.btabs { display: flex; height: 42px; padding-top: 4px; }
.btabs button { display: flex; align-items: center; gap: 8px; padding: 1px 14px 0; border-top: 3px solid transparent; }
.btabs .on { padding: 1px 20px 0 14px; background: var(--panel); border-top-color: var(--blue); }
.count { height: 39px; padding: 8px 14px; background: var(--panel); font-size: 15px; }
.table-area { display: flex; height: 250px; }
.table-clip { flex: 1; overflow: hidden; }
table { width: 100%; table-layout: fixed; border-collapse: separate; border-spacing: 0; font-size: 15px; }
.c-idx { width: 28px; }
.c-val { width: 149px; }
th, td { height: 31px; padding: 0 10px; text-align: left; font-weight: 400; border-right: 1px solid #404040; }
th:last-child, td:last-child { border-right: 0; }
thead th, thead td { height: 29px; padding-top: 2px; background: var(--deep); border-bottom: 2px solid #2c63c4; }
tr > :first-child { padding: 0 0 0 9px; border-right: 2px solid #2c63c4; }
tbody td { color: var(--muted); }
tbody tr:nth-child(even) { background: var(--deep); }
.vscroll { width: 8px; background: var(--panel); }
.vscroll div { height: 110px; border-radius: 4px; background: #616161; }

.status { display: flex; align-items: center; justify-content: flex-end; gap: 7px; height: 34px; padding-right: 6px; background: var(--panel); border-top: 1px solid #484848; }
.res { width: 134px; height: 29px; }
```
